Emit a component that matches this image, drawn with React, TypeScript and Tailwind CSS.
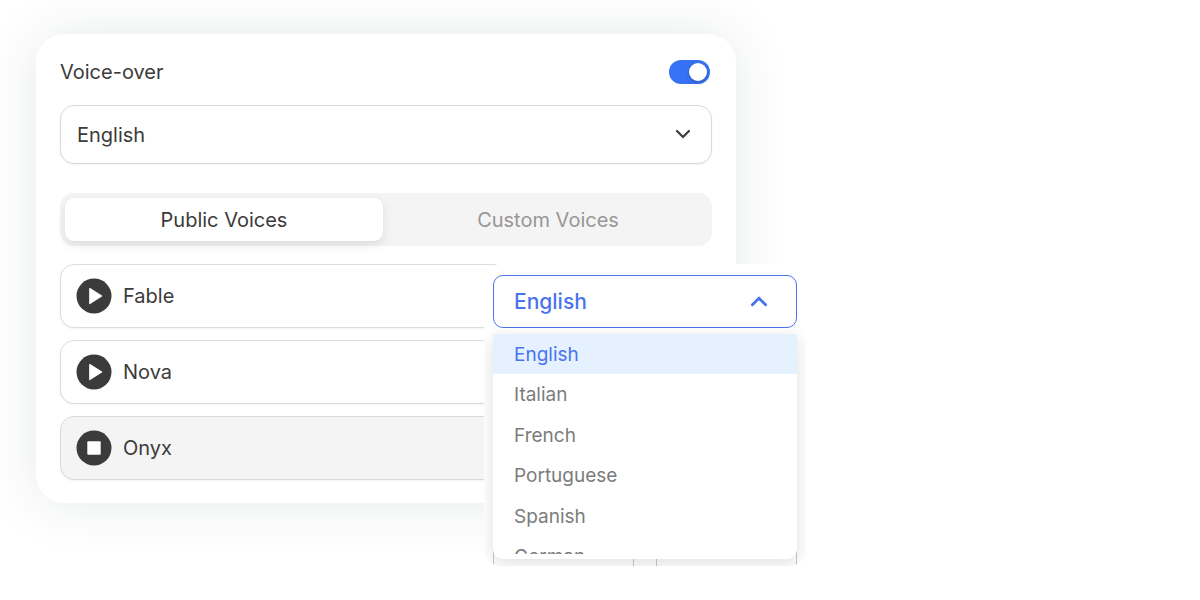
import * as React from "react";

const LANGUAGES = ["English", "Italian", "French", "Portuguese", "Spanish", "German"];
const VOICES = ["Fable", "Nova", "Onyx"];

const Chevron = ({ className }: { className: string }) => (
  <svg
    viewBox="0 0 16 10"
    className={className}
    fill="none"
    stroke="currentColor"
    strokeLinecap="round"
    strokeLinejoin="miter"
    aria-hidden="true"
  >
    <path d="M2 2l6 6 6-6" />
  </svg>
);

const PlayIcon = () => (
  <svg viewBox="0 0 36 36" className="size-9" aria-hidden="true">
    <circle cx="18" cy="18" r="17.5" fill="#3b3b3b" />
    <path
      d="M13.8 10.6L25.6 18 13.8 25.6z"
      fill="#fff"
      stroke="#fff"
      strokeWidth="1.2"
      strokeLinejoin="round"
    />
  </svg>
);

const StopIcon = () => (
  <svg viewBox="0 0 36 36" className="size-9" aria-hidden="true">
    <circle cx="18" cy="18" r="17.5" fill="#3b3b3b" />
    <rect x="11.3" y="11.3" width="13.4" height="13.4" rx="1" fill="#fff" />
  </svg>
);

function VoiceRow({
  name,
  playing,
  onToggle,
}: {
  name: string;
  playing: boolean;
  onToggle: () => void;
}) {
  return (
    <li
      className={`flex h-16 items-center gap-[11px] rounded-[14px] border px-[15px] shadow-[0_1px_2px_rgba(0,0,0,0.05)] ${
        playing ? "border-[#dadada] bg-[#f4f4f4]" : "border-[#dcdcdc] bg-white"
      }`}
    >
      <button type="button" onClick={onToggle} aria-label={`${playing ? "Stop" : "Play"} ${name}`}>
        {playing ? <StopIcon /> : <PlayIcon />}
      </button>
      <span className="text-[20px] leading-7">{name}</span>
    </li>
  );
}

function LanguageMenu({ value, onChange }: { value: string; onChange: (v: string) => void }) {
  const [open, setOpen] = React.useState(true);

  return (
    <div className="absolute top-[230px] left-[448px] h-[302px] w-[322px] overflow-hidden rounded-[16px] bg-white px-[9px] pt-[11px]">
      <button
        type="button"
        aria-haspopup="listbox"
        aria-expanded={open}
        onClick={() => setOpen(!open)}
        className="flex h-[53px] w-full items-center justify-between rounded-[10px] border border-[#4a74ee] pr-7 pl-5 text-[21px] leading-7 font-medium text-[#4a74ee]"
      >
        {value}
        <Chevron className={open ? "h-[11px] w-[18px] rotate-180 stroke-[2.6]" : "h-[11px] w-[18px] stroke-[2.6]"} />
      </button>

      {/* sides of the cards that the open list covers */}
      <div className="absolute inset-x-[9px] bottom-0 flex h-[15px] justify-between" aria-hidden="true">
        <span className="w-[141px] border-x border-[#c9c9c9]" />
        <span className="w-[141px] border-x border-[#c9c9c9]" />
      </div>

      {open && (
        <div className="relative mt-[6px] rounded-b-[10px] bg-white pb-[5px] shadow-[0_4px_18px_rgba(0,0,0,0.13)]">
          <ul role="listbox" aria-label="Language" className="h-[220px] overflow-hidden">
            {LANGUAGES.map((lang) => (
              <li
                key={lang}
                role="option"
                aria-selected={lang === value}
                onClick={() => onChange(lang)}
                className={`flex h-10 cursor-pointer items-center pt-px pl-[21px] text-[19px] leading-6 even:mb-px ${
                  lang === value ? "bg-[#e5f1fe] text-[#4a74ee]" : "text-[#7c7c7c]"
                }`}
              >
                {lang}
              </li>
            ))}
          </ul>
        </div>
      )}
    </div>
  );
}

export default function App() {
  const [enabled, setEnabled] = React.useState(true);
  const [language, setLanguage] = React.useState("English");
  const [tab, setTab] = React.useState("Public Voices");
  const [playing, setPlaying] = React.useState("Onyx");

  return (
    <main className="min-h-screen overflow-hidden bg-white px-9 py-[34px] font-['Inter',sans-serif] text-[#3b3b3b]">
      <section className="relative max-w-[700px] rounded-[28px] bg-white p-6 pt-[25px] pb-[23px] shadow-[0_0_56px_rgba(20,50,40,0.10)]">
        <label className="flex h-[26px] items-center justify-between pr-[2px] text-[20px] leading-[26px]">
          Voice-over
          <input
            type="checkbox"
            role="switch"
            checked={enabled}
            onChange={(e) => setEnabled(e.target.checked)}
            className="flex h-6 w-[41px] appearance-none items-center rounded-full bg-[#bdbdbd] px-[3px] before:size-[18px] before:rounded-full before:bg-white before:shadow-[0_2px_4px_rgba(0,0,0,0.2)] checked:justify-end checked:bg-[#3772f6]"
          />
        </label>

        <div className="relative mt-5">
          <select
            aria-label="Voice language"
            value={language}
            onChange={(e) => setLanguage(e.target.value)}
            className="h-[59px] w-full appearance-none rounded-[14px] border border-[#dadada] bg-white px-4 text-[20px] leading-7 shadow-[0_1px_2px_rgba(0,0,0,0.05)]"
          >
            {LANGUAGES.map((lang) => (
              <option key={lang}>{lang}</option>
            ))}
          </select>
          <Chevron className="pointer-events-none absolute top-6 right-[21px] h-[10px] w-4 stroke-[2.2]" />
        </div>

        <div role="tablist" className="mt-[29px] grid h-[53px] grid-cols-2 gap-[6px] rounded-[14px] bg-[#f4f4f4] p-[5px]">
          {["Public Voices", "Custom Voices"].map((name) => (
            <button
              key={name}
              type="button"
              role="tab"
              aria-selected={tab === name}
              onClick={() => setTab(name)}
              className={`rounded-[9px] text-[20px] leading-7 ${
                tab === name
                  ? "bg-white shadow-[0_4px_10px_rgba(0,0,0,0.10)]"
                  : "text-[#979797]"
              }`}
            >
              {name}
            </button>
          ))}
        </div>

        <ul className="mt-[18px] grid gap-3">
          {VOICES.map((name) => (
            <VoiceRow
              key={name}
              name={name}
              playing={playing === name}
              onToggle={() => setPlaying(playing === name ? "" : name)}
            />
          ))}
        </ul>

        <LanguageMenu value={language} onChange={setLanguage} />
      </section>
    </main>
  );
}
